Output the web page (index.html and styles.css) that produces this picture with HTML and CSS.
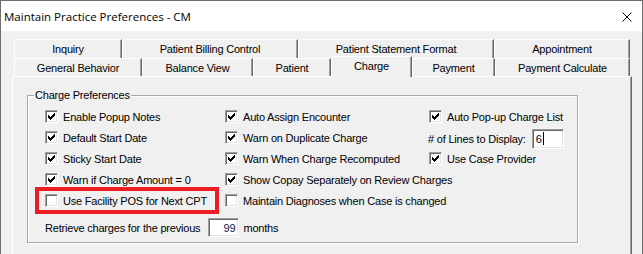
FILE: index.html
```html
<!DOCTYPE html>
<html>
<head>
<meta charset="utf-8">
<link rel="stylesheet" href="styles.css">
</head>
<body>
<div class="window">
  <div class="titlebar">
    <span class="title">Maintain Practice Preferences - CM</span>
    <svg class="close" width="10" height="10" viewBox="0 0 10 10"><path d="M0.5 0.5L9.5 9.5M9.5 0.5L0.5 9.5" stroke="#000" stroke-width="1" fill="none"/></svg>
  </div>
  <div class="client">
    <div class="tabrow tabrow-back">
      <div class="tab t-inquiry">Inquiry</div>
      <div class="tab t-billing">Patient Billing Control</div>
      <div class="tab t-statement">Patient Statement Format</div>
      <div class="tab t-appointment">Appointment</div>
    </div>
    <div class="tabrow tabrow-front">
      <div class="tab t-general">General Behavior</div>
      <div class="tab t-balance">Balance View</div>
      <div class="tab t-patient">Patient</div>
      <div class="tab t-charge tab-selected">Charge</div>
      <div class="tab t-payment">Payment</div>
      <div class="tab t-calc">Payment Calculate</div>
    </div>
    <div class="panel">
      <fieldset class="group">
        <legend class="group-label">Charge Preferences</legend>
        <div class="group-body">
          <div class="grid">
            <div class="cell"><span class="check"><svg width="7" height="7" viewBox="0 0 7 7"><path d="M0 2h1v3h-1zM1 3h1v3h-1zM2 4h1v3h-1zM3 3h1v3h-1zM4 2h1v3h-1zM5 1h1v3h-1zM6 0h1v3h-1z" fill="#000"/></svg></span>Enable Popup Notes</div>
            <div class="cell"><span class="check"><svg width="7" height="7" viewBox="0 0 7 7"><path d="M0 2h1v3h-1zM1 3h1v3h-1zM2 4h1v3h-1zM3 3h1v3h-1zM4 2h1v3h-1zM5 1h1v3h-1zM6 0h1v3h-1z" fill="#000"/></svg></span>Auto Assign Encounter</div>
            <div class="cell"><span class="check"><svg width="7" height="7" viewBox="0 0 7 7"><path d="M0 2h1v3h-1zM1 3h1v3h-1zM2 4h1v3h-1zM3 3h1v3h-1zM4 2h1v3h-1zM5 1h1v3h-1zM6 0h1v3h-1z" fill="#000"/></svg></span>Auto Pop-up Charge List</div>

            <div class="cell"><span class="check"><svg width="7" height="7" viewBox="0 0 7 7"><path d="M0 2h1v3h-1zM1 3h1v3h-1zM2 4h1v3h-1zM3 3h1v3h-1zM4 2h1v3h-1zM5 1h1v3h-1zM6 0h1v3h-1z" fill="#000"/></svg></span>Default Start Date</div>
            <div class="cell"><span class="check"><svg width="7" height="7" viewBox="0 0 7 7"><path d="M0 2h1v3h-1zM1 3h1v3h-1zM2 4h1v3h-1zM3 3h1v3h-1zM4 2h1v3h-1zM5 1h1v3h-1zM6 0h1v3h-1z" fill="#000"/></svg></span>Warn on Duplicate Charge</div>
            <div class="cell cell-lines"><span class="lines-label"># of Lines to Display:</span><span class="field field-lines">6<span class="caret"></span></span></div>

            <div class="cell"><span class="check"><svg width="7" height="7" viewBox="0 0 7 7"><path d="M0 2h1v3h-1zM1 3h1v3h-1zM2 4h1v3h-1zM3 3h1v3h-1zM4 2h1v3h-1zM5 1h1v3h-1zM6 0h1v3h-1z" fill="#000"/></svg></span>Sticky Start Date</div>
            <div class="cell"><span class="check"><svg width="7" height="7" viewBox="0 0 7 7"><path d="M0 2h1v3h-1zM1 3h1v3h-1zM2 4h1v3h-1zM3 3h1v3h-1zM4 2h1v3h-1zM5 1h1v3h-1zM6 0h1v3h-1z" fill="#000"/></svg></span>Warn When Charge Recomputed</div>
            <div class="cell"><span class="check"><svg width="7" height="7" viewBox="0 0 7 7"><path d="M0 2h1v3h-1zM1 3h1v3h-1zM2 4h1v3h-1zM3 3h1v3h-1zM4 2h1v3h-1zM5 1h1v3h-1zM6 0h1v3h-1z" fill="#000"/></svg></span>Use Case Provider</div>

            <div class="cell"><span class="check"><svg width="7" height="7" viewBox="0 0 7 7"><path d="M0 2h1v3h-1zM1 3h1v3h-1zM2 4h1v3h-1zM3 3h1v3h-1zM4 2h1v3h-1zM5 1h1v3h-1zM6 0h1v3h-1z" fill="#000"/></svg></span>Warn if Charge Amount = 0</div>
            <div class="cell cell-wide"><span class="check"><svg width="7" height="7" viewBox="0 0 7 7"><path d="M0 2h1v3h-1zM1 3h1v3h-1zM2 4h1v3h-1zM3 3h1v3h-1zM4 2h1v3h-1zM5 1h1v3h-1zM6 0h1v3h-1z" fill="#000"/></svg></span>Show Copay Separately on Review Charges</div>

            <div class="cell cell-marked"><span class="check"></span>Use Facility POS for Next CPT<span class="highlight"></span></div>
            <div class="cell cell-wide"><span class="check"></span>Maintain Diagnoses when Case is changed</div>
          </div>
          <div class="retrieve">
            <span>Retrieve charges for the previous</span>
            <span class="field field-months">99</span>
            <span>months</span>
          </div>
        </div>
      </fieldset>
    </div>
  </div>
</div>
</body>
</html>
```
FILE: styles.css
```css
html, body {
  margin: 0;
  padding: 0;
  background: #f0f0f0;
}

body {
  font-family: "Liberation Sans", Arial, sans-serif;
  font-size: 11px;
  letter-spacing: -0.2px;
  color: #000;
}

.window {
  width: 643px;
  height: 254px;
  box-sizing: border-box;
  border: 1px solid #6e6e6e;
  border-bottom: none;
  overflow: hidden;
  background: #f0f0f0;
}

.titlebar {
  height: 30px;
  background: #fff;
  display: flex;
  align-items: center;
  padding-left: 3px;
  padding-right: 10px;
}

.title {
  font-family: "Open Sans", "Noto Sans", sans-serif;
  font-size: 11.5px;
  letter-spacing: 0;
  flex: 1;
  padding-top: 1px;
}

.close {
  display: block;
  margin-top: 1px;
}

.client {
  padding: 8px 0 0 11px;
}

.tabrow {
  display: flex;
  margin-left: 2px;
}

.tabrow-back {
  height: 19px;
}

.tabrow-front {
  height: 18px;
  align-items: flex-end;
}

.tab {
  box-sizing: border-box;
  height: 100%;
  display: flex;
  align-items: center;
  justify-content: center;
  background: #f0f0f0;
  border-top: 1px solid #fff;
  border-left: 1px solid #fff;
  border-right: 1px solid #696969;
  box-shadow: inset -1px 0 0 #a0a0a0;
  border-top-left-radius: 2px;
  white-space: nowrap;
}

.tabrow-front .tab {
  height: 18px;
}

.t-inquiry { width: 108px; }
.t-billing { width: 176px; }
.t-statement { width: 196px; }
.t-appointment { width: 136px; }

.t-general { width: 128px; }
.t-balance { width: 111px; }
.t-patient { width: 78px; }
.t-charge { width: 81px; }
.t-payment { width: 83px; }
.t-calc { width: 135px; }

.tabrow-front .tab-selected {
  height: 21px;
  margin-bottom: -1px;
  padding-bottom: 3px;
  position: relative;
  z-index: 1;
}

.panel {
  width: 620px;
  height: 190px;
  box-sizing: border-box;
  border-top: 1px solid #fff;
  border-left: 1px solid #fff;
  border-right: 1px solid #696969;
  box-shadow: inset -1px 0 0 #a0a0a0;
  padding-top: 12px;
}

.group {
  margin: 0 0 0 14px;
  width: 551px;
  box-sizing: border-box;
  padding: 4px 0 5px 6px;
  border: 1px solid #a8a8a8;
  box-shadow: inset 1px 1px 0 #fff, 1px 1px 0 #fff;
  min-width: 0;
}

.group-label {
  padding: 0 1px;
  line-height: 13px;
  background: #f0f0f0;
}

.group-body {
  padding-left: 11px;
}

.grid {
  display: grid;
  grid-template-columns: 180px 204px 1fr;
  grid-auto-rows: 21px;
}

.cell {
  display: flex;
  align-items: center;
  white-space: nowrap;
}

.cell-wide {
  grid-column: 2 / 4;
}

.cell-marked {
  grid-column: 1;
  position: relative;
}

.check {
  width: 13px;
  height: 13px;
  box-sizing: border-box;
  flex: none;
  display: inline-flex;
  align-items: center;
  justify-content: center;
  background: #fff;
  border: 1px solid;
  border-color: #a0a0a0 #fff #fff #a0a0a0;
  box-shadow: inset 1px 1px 0 #696969, inset -1px -1px 0 #e3e3e3;
  margin-right: 5px;
}

.check svg {
  display: block;
  shape-rendering: crispEdges;
}

.cell-lines {
  margin-left: -1px;
  padding-top: 2px;
}

.field {
  box-sizing: border-box;
  background: #fff;
  border: 1px solid;
  border-color: #a0a0a0 #fff #fff #a0a0a0;
  box-shadow: inset 1px 1px 0 #696969, inset -1px -1px 0 #e3e3e3;
  display: inline-flex;
  align-items: center;
}

.field-lines {
  width: 32px;
  height: 20px;
  margin-left: 6px;
  padding-left: 3px;
}

.caret {
  width: 1px;
  height: 13px;
  background: #000;
  margin-left: 1px;
}

.field-months {
  width: 31px;
  height: 19px;
  justify-content: flex-end;
  padding-right: 3px;
  margin: 0 4px 0 8px;
  color: #0a1a4a;
}

.retrieve {
  display: flex;
  align-items: center;
  height: 19px;
  margin-top: 7px;
}

.highlight {
  position: absolute;
  left: -10px;
  top: -3px;
  width: 184px;
  height: 27px;
  box-sizing: border-box;
  border: 4px solid #ed1c24;
}
```
